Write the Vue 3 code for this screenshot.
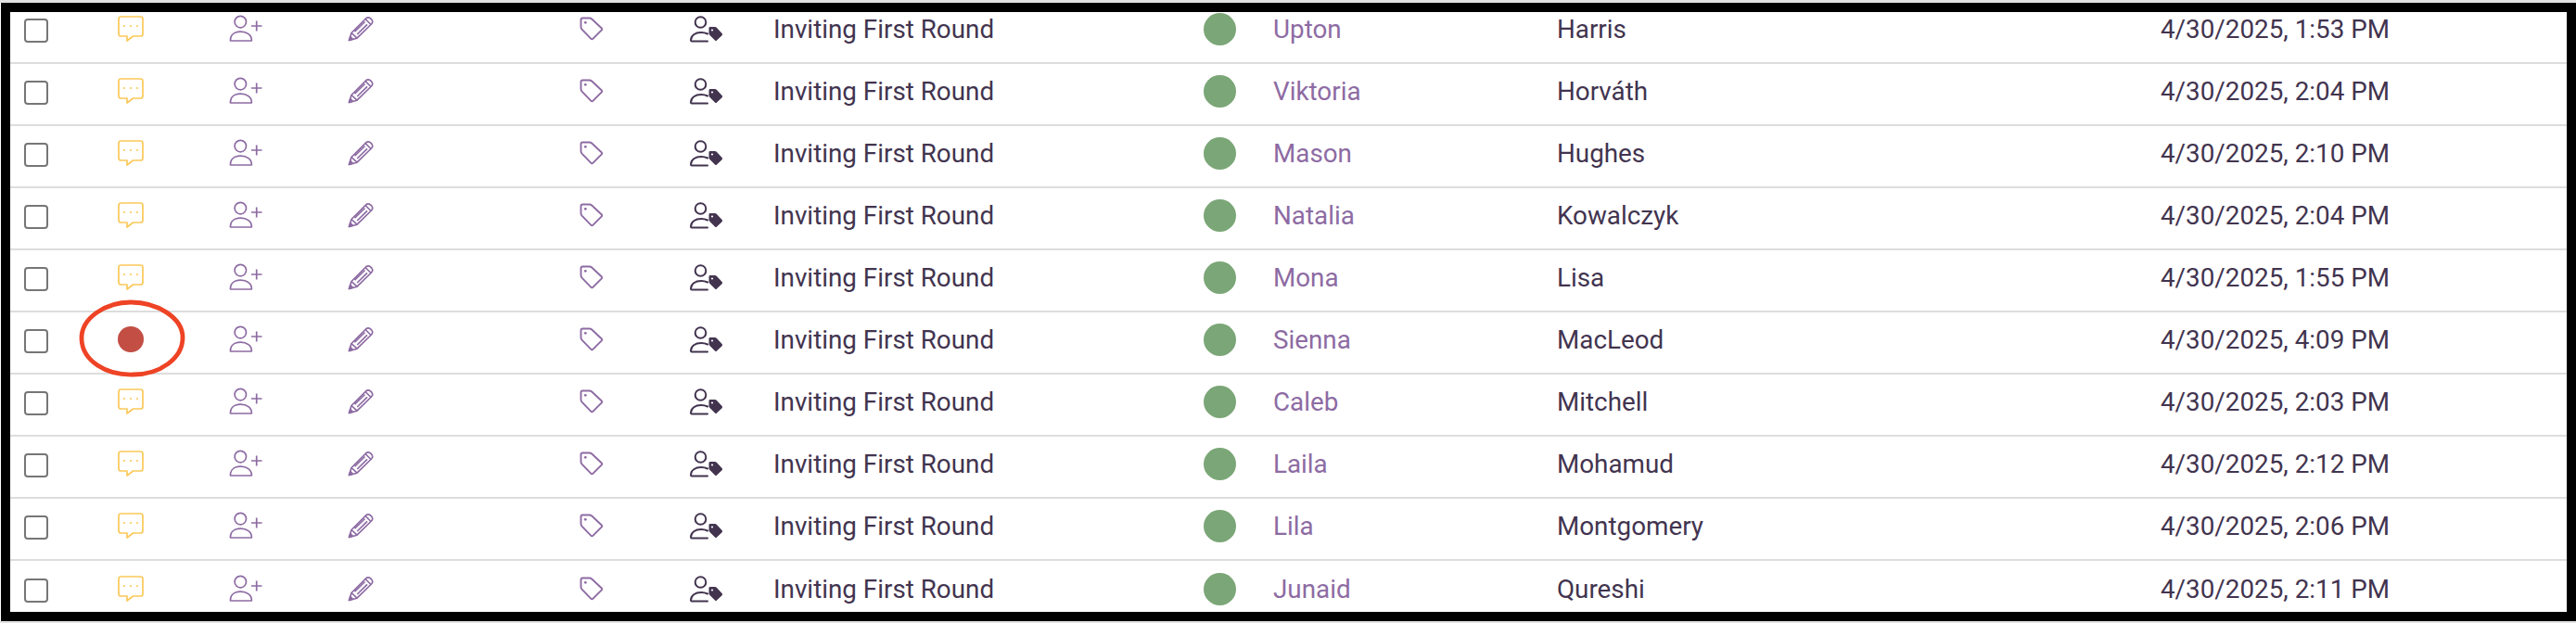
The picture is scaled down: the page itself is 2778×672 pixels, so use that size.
<script setup>
const candidates = [
  { first: 'Upton', last: 'Harris', time: '4/30/2025, 1:53 PM' },
  { first: 'Viktoria', last: 'Horváth', time: '4/30/2025, 2:04 PM' },
  { first: 'Mason', last: 'Hughes', time: '4/30/2025, 2:10 PM' },
  { first: 'Natalia', last: 'Kowalczyk', time: '4/30/2025, 2:04 PM' },
  { first: 'Mona', last: 'Lisa', time: '4/30/2025, 1:55 PM' },
  { first: 'Sienna', last: 'MacLeod', time: '4/30/2025, 4:09 PM', flagged: true },
  { first: 'Caleb', last: 'Mitchell', time: '4/30/2025, 2:03 PM' },
  { first: 'Laila', last: 'Mohamud', time: '4/30/2025, 2:12 PM' },
  { first: 'Lila', last: 'Montgomery', time: '4/30/2025, 2:06 PM' },
  { first: 'Junaid', last: 'Qureshi', time: '4/30/2025, 2:11 PM' },
]
</script>

<template>
  <div class="page">
    <div class="frame">
      <div v-for="c in candidates" :key="c.first" class="row">
        <input class="check" type="checkbox" />

        <div class="cell">
          <span v-if="c.flagged" class="flag"></span>
          <svg v-else width="28" height="28" viewBox="0 0 28 28" fill="none">
            <path d="M3.5 1H24.5Q27 1 27 3.5V19.5Q27 22 24.5 22H16.5L10 27V22H3.5Q1 22 1 19.5V3.5Q1 1 3.5 1Z" stroke="#fbc95a" stroke-width="1.7" stroke-linejoin="round" />
            <circle cx="7" cy="11" r="1.1" fill="#fbc95a" />
            <circle cx="14" cy="11" r="1.1" fill="#fbc95a" />
            <circle cx="21" cy="11" r="1.1" fill="#fbc95a" />
          </svg>
          <svg v-if="c.flagged" class="circled" width="117" height="85" viewBox="0 0 117 85" fill="none">
            <path d="M4 43C3 20 30 3 57 3C86 3 113 20 113 41C113 64 88 81 60 81C30 82 5 66 4 43Z" stroke="#ee4325" stroke-width="4.8" />
          </svg>
        </div>

        <div class="cell">
          <svg width="37" height="30" viewBox="0 0 37 30" fill="none" stroke="#8d6ba3" stroke-width="1.7">
            <circle cx="12.3" cy="7.6" r="6.2" />
            <path d="M1.4 27.6C1.4 21.5 6 18.2 12.5 18.2C19 18.2 24.4 21.5 24.4 27.6Q24.4 28 24 28H1.8Q1.4 28 1.4 27.6Z" />
            <path d="M29.7 6.5V17.5M24 12H35.5" />
          </svg>
        </div>

        <div class="cell">
          <svg width="28" height="28" viewBox="0 0 28 28" fill="none" stroke="#8d6ba3" stroke-width="1.7" stroke-linejoin="round">
            <path d="M1.5 26.5L4 18.5L19.5 3Q22 .8 24.5 2.8L25.8 4.2Q27.8 6.6 25.5 9L10 24.2Z" />
            <path d="M4 18.5L10 24.2M7.5 17.2L18.5 6.5M10.2 20L21 9.3M19 3.5L25 9.5" />
            <path d="M1.5 26.5L2.8 22.6L5.5 25.3Z" fill="#8d6ba3" />
          </svg>
        </div>

        <div class="cell">
          <svg width="26" height="26" viewBox="0 0 26 26" fill="none" stroke="#8d6ba3" stroke-width="1.9" stroke-linejoin="round">
            <path d="M1.5 3.2Q1.5 1.5 3.2 1.5H10.5Q12 1.5 13.2 2.5L23.6 12.2Q24.8 13.4 23.6 14.6L14.6 23.6Q13.4 24.8 12.2 23.6L2.5 13.6Q1.5 12.5 1.5 11Z" />
            <circle cx="6.3" cy="6.3" r="1.4" fill="#8d6ba3" stroke="none" />
          </svg>
        </div>

        <div class="cell">
          <svg width="36" height="30" viewBox="0 0 36 30" fill="none">
            <circle cx="11.5" cy="8" r="5.8" stroke="#42344f" stroke-width="2" />
            <path d="M2 28.5Q1 28.5 1 27.5C1 22 6 19 12 19C14.5 19 17 19.5 19 20.5M2 28.5H19" stroke="#42344f" stroke-width="2" stroke-linecap="round" />
            <path d="M20.5 14.2Q20.5 13 22 13H27Q28 13 29 14L34.6 20Q35.6 21 34.6 22.2L29 27.6Q28 28.6 27 27.6L21.5 22Q20.5 21 20.5 20Z" fill="#42344f" />
            <circle cx="24" cy="16.5" r="1.1" fill="#fff" />
          </svg>
        </div>

        <div class="cell">Inviting First Round</div>
        <div class="cell"><span class="status"></span></div>
        <div class="cell first">{{ c.first }}</div>
        <div class="cell">{{ c.last }}</div>
        <div class="cell">{{ c.time }}</div>
      </div>
    </div>
  </div>
</template>

<style scoped>
.page {
  box-sizing: border-box;
  height: 672px;
  padding-left: 1px;
  border-top: 3px solid #e2e2e2;
  border-bottom: 2px solid #e2e2e2;
  background: #fff;
}

.frame {
  box-sizing: border-box;
  height: 667px;
  border: 10px solid #000;
  background: #fff;
  overflow: hidden;
  font-family: Roboto, "Liberation Sans", sans-serif;
  font-size: 27.8px;
  color: #42344f;
}

.row {
  display: grid;
  grid-template-columns: 101px 120px 128px 250px 119px 90px 464px 75px 306px 651px 1fr;
  align-items: center;
  box-sizing: border-box;
  height: 67px;
  padding: 0 0 7px 15px;
  border-bottom: 2px solid #dddddd;
}

.row:first-child {
  margin-top: -11px;
}

.row:last-child {
  border-bottom: 0;
}

.cell {
  position: relative;
  display: flex;
  align-items: center;
  min-height: 35px;
  white-space: nowrap;
}

.check {
  appearance: none;
  box-sizing: border-box;
  width: 26px;
  height: 26px;
  margin: 3px 0 0;
  border: 2.4px solid #767676;
  border-radius: 4px;
  background: #fff;
}

.flag {
  width: 28px;
  height: 28px;
  border-radius: 50%;
  background: #c24e44;
}

.circled {
  position: absolute;
  left: -43px;
  top: -26px;
}

.status {
  width: 35px;
  height: 35px;
  border-radius: 50%;
  background: #7ba677;
}

.first {
  color: #8d6ba3;
}
</style>
